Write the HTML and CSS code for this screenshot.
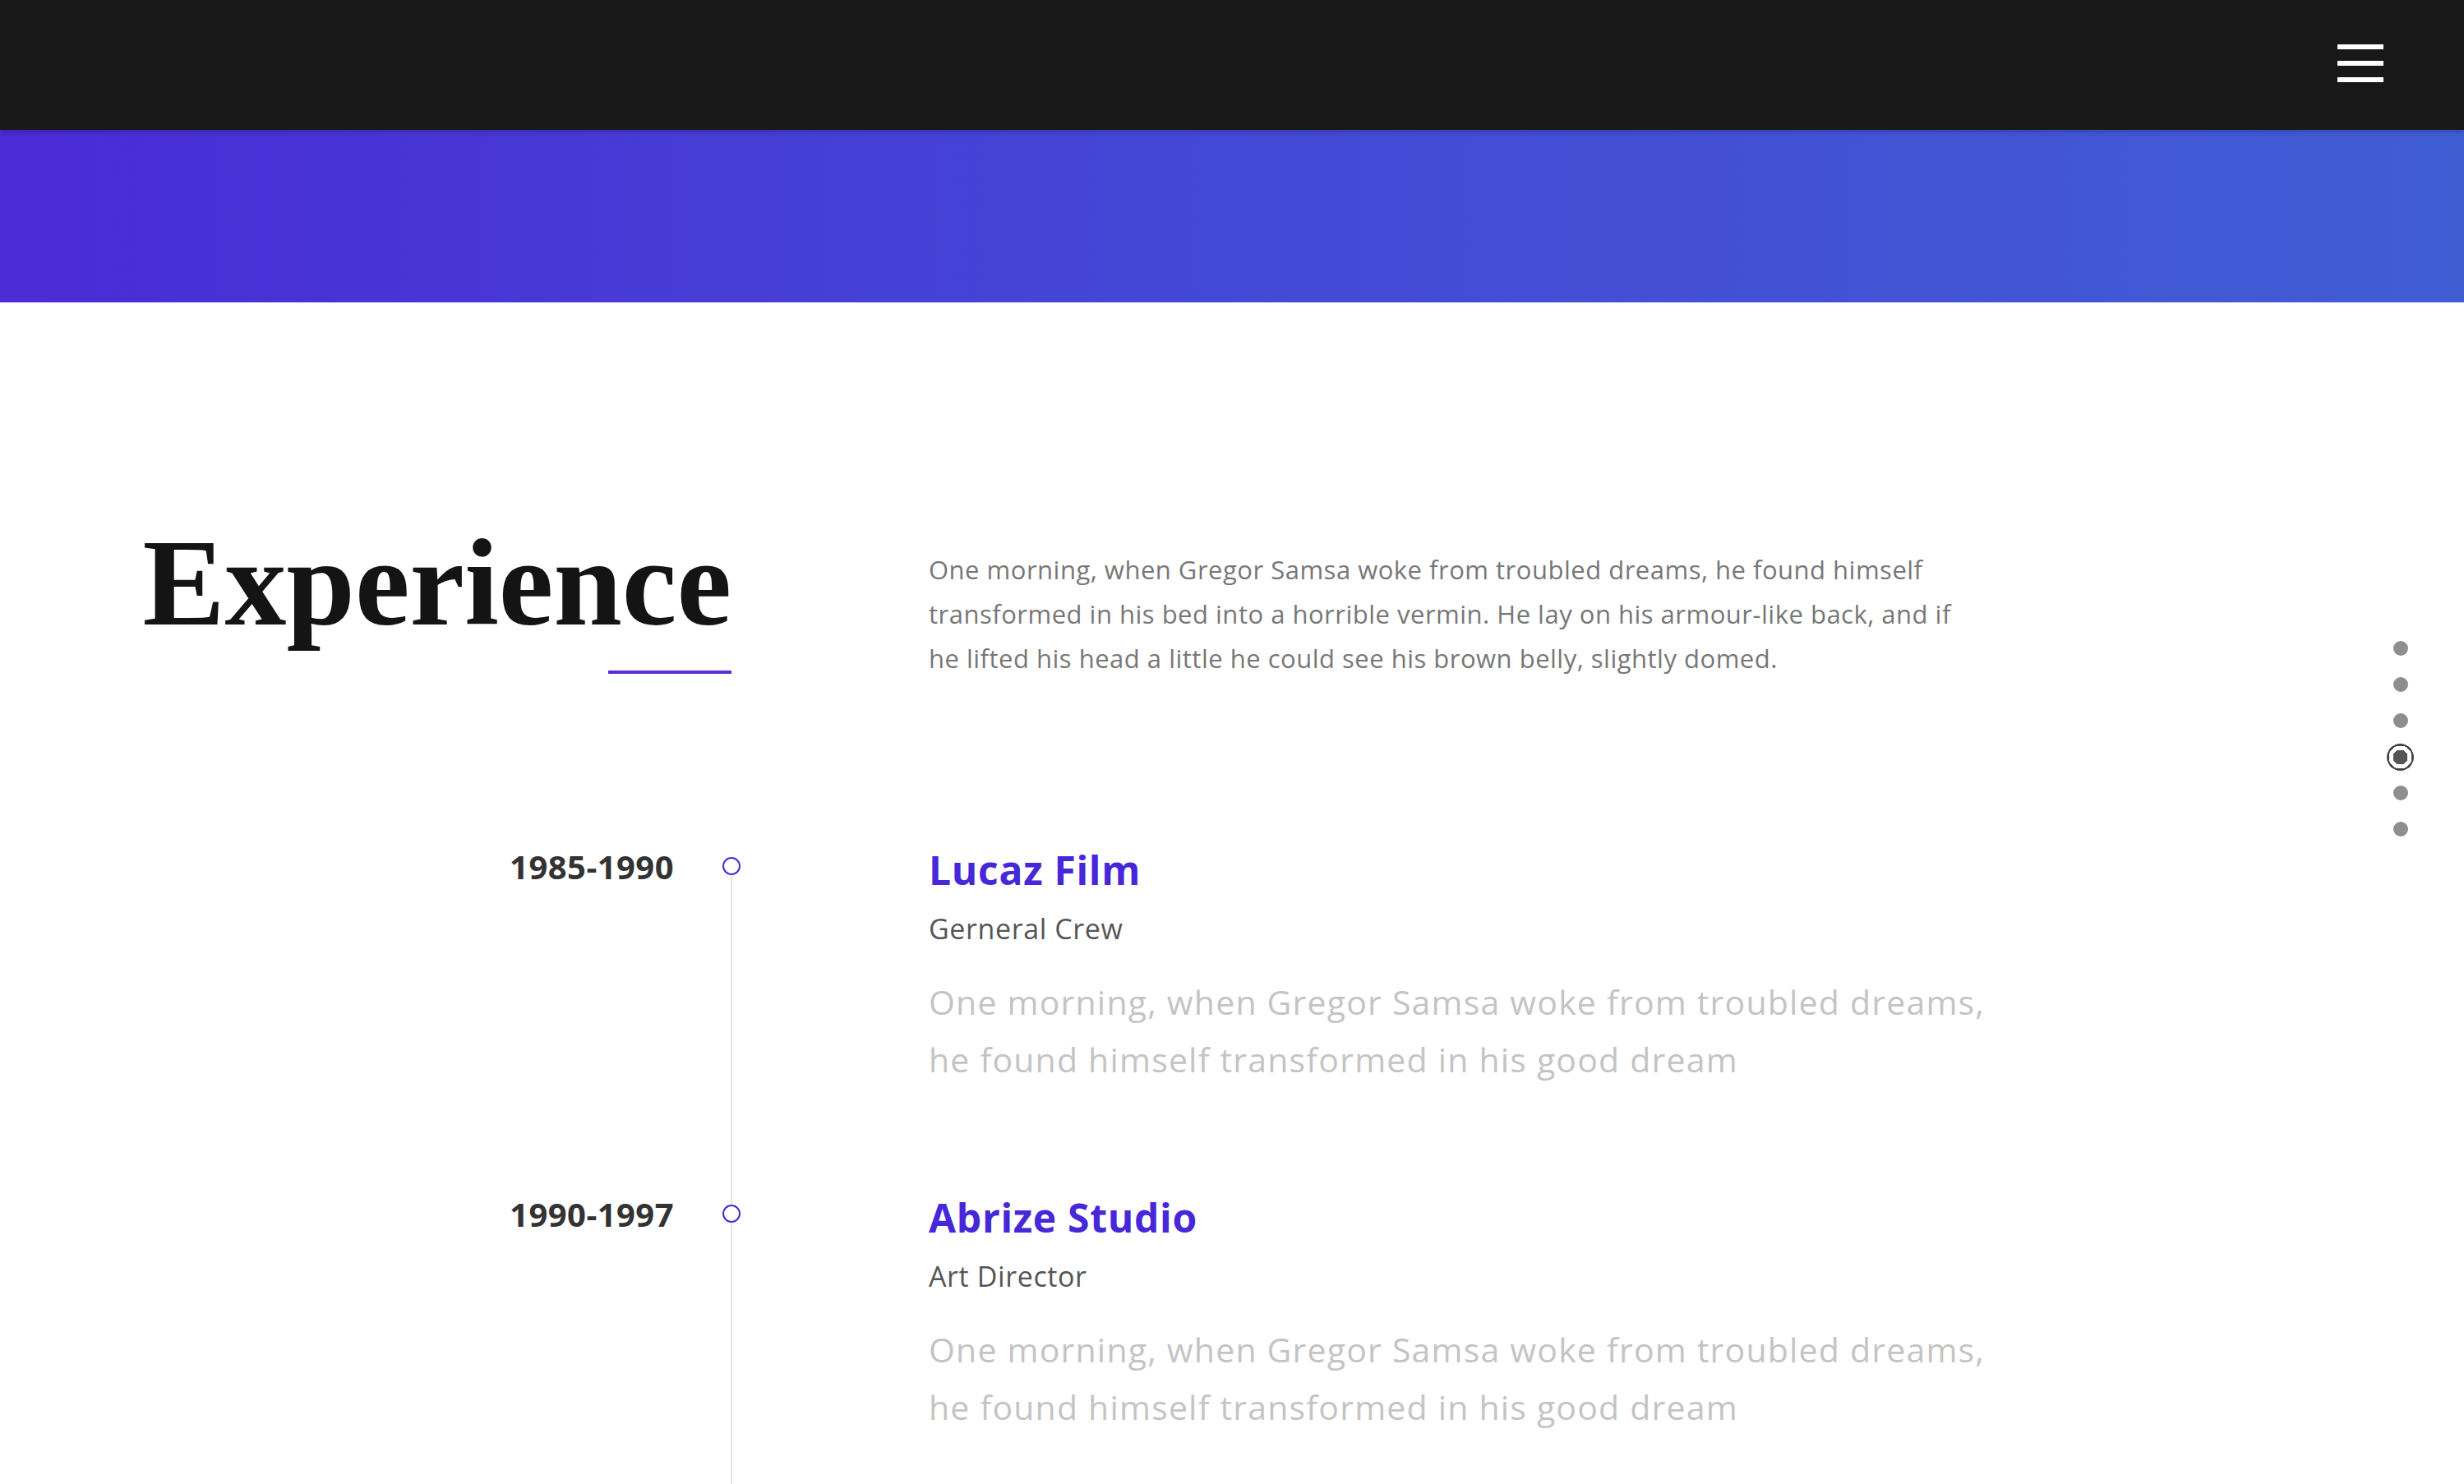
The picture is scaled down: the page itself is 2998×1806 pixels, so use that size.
FILE: index.html
```html
<!DOCTYPE html>
<html lang="en">
<head>
<meta charset="utf-8">
<title>Experience</title>
<link rel="stylesheet" href="styles.css">
</head>
<body>
<header class="topbar">
  <button class="burger" aria-label="Menu">
    <span></span><span></span><span></span>
  </button>
</header>
<div class="hero"></div>

<main class="section">
  <div class="intro">
    <div class="intro-left">
      <h1 class="title">Experience</h1>
      <div class="title-rule"></div>
    </div>
    <p class="intro-text">One morning, when Gregor Samsa woke from troubled dreams, he found himself transformed in his bed into a horrible vermin. He lay on his armour-like back, and if he lifted his head a little he could see his brown belly, slightly domed.</p>
  </div>

  <div class="timeline">
    <div class="tl-item">
      <div class="tl-left">
        <span class="tl-date">1985-1990</span>
        <span class="tl-dot"></span>
      </div>
      <div class="tl-body">
        <h2 class="tl-company">Lucaz Film</h2>
        <div class="tl-role">Gerneral Crew</div>
        <p class="tl-desc">One morning, when Gregor Samsa woke from troubled dreams, he found himself transformed in his good dream</p>
      </div>
    </div>
    <div class="tl-item">
      <div class="tl-left">
        <span class="tl-date">1990-1997</span>
        <span class="tl-dot"></span>
      </div>
      <div class="tl-body">
        <h2 class="tl-company">Abrize Studio</h2>
        <div class="tl-role">Art Director</div>
        <p class="tl-desc">One morning, when Gregor Samsa woke from troubled dreams, he found himself transformed in his good dream</p>
      </div>
    </div>
  </div>
</main>

<nav class="side-nav">
  <span class="nav-dot"></span>
  <span class="nav-dot"></span>
  <span class="nav-dot"></span>
  <span class="nav-dot active"></span>
  <span class="nav-dot"></span>
  <span class="nav-dot"></span>
</nav>
</body>
</html>
```

FILE: styles.css
```css
* { box-sizing: border-box; }

html, body {
  margin: 0;
  padding: 0;
  background: #ffffff;
  font-family: "Open Sans", "Noto Sans", sans-serif;
  overflow: hidden;
}

.topbar {
  height: 158px;
  background: #181818;
  display: flex;
  justify-content: flex-end;
  align-items: center;
  padding-right: 98px;
  position: relative;
  z-index: 2;
  box-shadow: 0 2px 6px rgba(0, 0, 0, 0.25);
}

.burger {
  width: 56px;
  height: 46px;
  padding: 0;
  border: 0;
  background: transparent;
  display: flex;
  flex-direction: column;
  justify-content: space-between;
  margin-top: -4px;
}

.burger span {
  display: block;
  width: 56px;
  height: 6px;
  background: #ffffff;
}

.hero {
  height: 210px;
  background: linear-gradient(90deg, #4a2bd6 0%, #4446d6 45%, #415dd4 100%);
}

.section {
  padding: 267px 0 0 172px;
}

.intro {
  display: grid;
  grid-template-columns: 718px 1262px;
  column-gap: 240px;
  align-items: start;
}

.intro-left {
  display: flex;
  flex-direction: column;
  align-items: flex-end;
}

.title {
  margin: 0;
  font-family: "Liberation Serif", "Times New Roman", serif;
  font-weight: 700;
  font-size: 150px;
  line-height: 148px;
  color: #141414;
  letter-spacing: 0;
}

.title-rule {
  width: 150px;
  height: 4px;
  margin-top: 33px;
  background: #5a2fd1;
}

.intro-text {
  margin: 31px 0 0;
  font-size: 31px;
  line-height: 54px;
  letter-spacing: 0.5px;
  color: #777777;
}

.timeline {
  margin-top: 200px;
}

.tl-item {
  display: grid;
  grid-template-columns: 718px 1320px;
  column-gap: 240px;
}

.tl-left {
  position: relative;
  display: flex;
  justify-content: flex-end;
  align-items: flex-start;
  padding-right: 70px;
}

.tl-left::after {
  content: "";
  position: absolute;
  right: -1px;
  top: 26px;
  bottom: 0;
  width: 2px;
  background: #e4e4e4;
}

.tl-item + .tl-item .tl-left::after {
  top: 0;
}

.tl-date {
  font-weight: 700;
  font-size: 40px;
  line-height: 54px;
  letter-spacing: 0.45px;
  color: #333333;
}

.tl-dot {
  position: absolute;
  right: -11px;
  top: 15px;
  width: 22px;
  height: 22px;
  border: 2px solid #4a2bd6;
  border-radius: 50%;
  background: #ffffff;
  z-index: 1;
}

.tl-body {
  padding-bottom: 127px;
}

.tl-company {
  margin: 0;
  font-weight: 700;
  font-size: 48px;
  line-height: 62px;
  letter-spacing: 0.7px;
  color: #4628d8;
}

.tl-role {
  margin-top: 17px;
  font-size: 34px;
  line-height: 46px;
  letter-spacing: 0.6px;
  color: #555555;
}

.tl-desc {
  margin: 31px 0 0;
  font-size: 41px;
  line-height: 70px;
  letter-spacing: 1.2px;
  color: #c4c4c4;
}

.side-nav {
  position: fixed;
  right: 61px;
  top: 767px;
  width: 33px;
  display: flex;
  flex-direction: column;
  align-items: center;
}

.nav-dot {
  width: 33px;
  height: 44px;
  display: flex;
  align-items: center;
  justify-content: center;
}

.nav-dot::before {
  content: "";
  width: 18px;
  height: 18px;
  border-radius: 50%;
  background: #8e8e8e;
}

.nav-dot.active::before {
  width: 33px;
  height: 33px;
  background: radial-gradient(circle, #555555 0 9px, #ffffff 9px 14px, #444444 14px 16.5px, transparent 16.5px);
}
```
